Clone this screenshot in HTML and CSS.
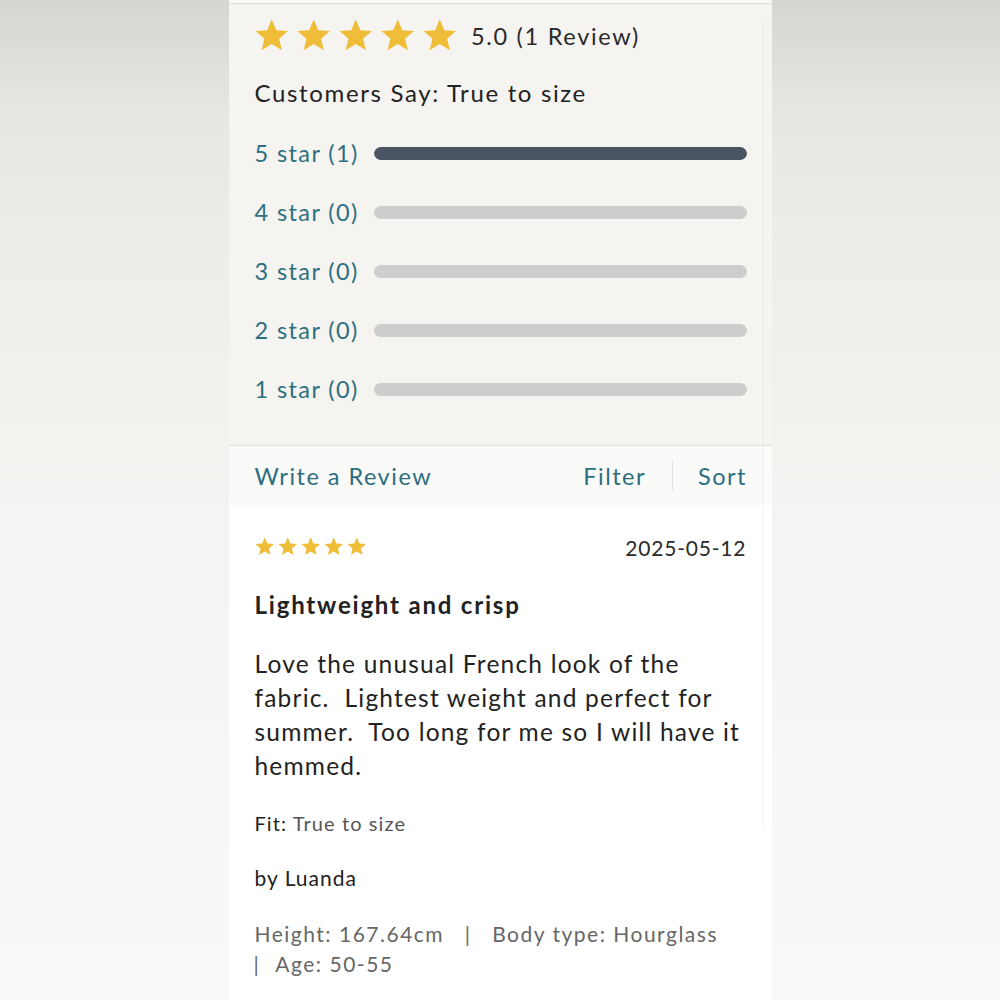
FILE: index.html
```html
<!DOCTYPE html>
<html lang="en">
<head>
<meta charset="utf-8">
<title>Reviews</title>
<link rel="stylesheet" href="styles.css">
</head>
<body>
<svg width="0" height="0" class="defs">
  <defs>
    <symbol id="star" viewBox="0 0 24 24">
      <polygon points="12,1.5 14.9,8.4 22.4,9 16.7,13.9 18.5,21.2 12,17.3 5.5,21.2 7.3,13.9 1.6,9 9.1,8.4"/>
    </symbol>
  </defs>
</svg>
<div class="phone">
  <div class="topstrip"></div>
  <section class="summary">
    <div class="rating-row">
      <div class="stars-lg">
        <svg class="star-lg"><use href="#star"/></svg>
        <svg class="star-lg"><use href="#star"/></svg>
        <svg class="star-lg"><use href="#star"/></svg>
        <svg class="star-lg"><use href="#star"/></svg>
        <svg class="star-lg"><use href="#star"/></svg>
      </div>
      <span class="avg">5.0 (1 Review)</span>
    </div>
    <div class="customers">Customers Say: True to size</div>
    <div class="bars">
      <div class="bar-row"><span class="bar-label">5 star (1)</span><div class="track"><div class="fill" style="width:100%"></div></div></div>
      <div class="bar-row"><span class="bar-label">4 star (0)</span><div class="track"><div class="fill" style="width:0%"></div></div></div>
      <div class="bar-row"><span class="bar-label">3 star (0)</span><div class="track"><div class="fill" style="width:0%"></div></div></div>
      <div class="bar-row"><span class="bar-label">2 star (0)</span><div class="track"><div class="fill" style="width:0%"></div></div></div>
      <div class="bar-row"><span class="bar-label">1 star (0)</span><div class="track"><div class="fill" style="width:0%"></div></div></div>
    </div>
  </section>
  <nav class="actions">
    <span class="link">Write a Review</span>
    <div class="right-links">
      <span class="link">Filter</span>
      <span class="sep"></span>
      <span class="link">Sort</span>
    </div>
  </nav>
  <article class="review">
    <div class="review-head">
      <div class="stars-sm">
        <svg class="star-sm"><use href="#star"/></svg>
        <svg class="star-sm"><use href="#star"/></svg>
        <svg class="star-sm"><use href="#star"/></svg>
        <svg class="star-sm"><use href="#star"/></svg>
        <svg class="star-sm"><use href="#star"/></svg>
      </div>
      <span class="date">2025-05-12</span>
    </div>
    <h3 class="title">Lightweight and crisp</h3>
    <p class="body">Love the unusual French look of the<br>fabric.&nbsp; Lightest weight and perfect for<br>summer.&nbsp; Too long for me so I will have it<br>hemmed.</p>
    <div class="fit"><span class="fit-key">Fit:</span> True to size</div>
    <div class="author">by Luanda</div>
    <div class="meta">Height: 167.64cm &nbsp; <span class="pipe">|</span> &nbsp; Body type: Hourglass<br><span class="pipe pipe-lead">|</span>&nbsp; Age: 50-55</div>
  </article>
</div>
</body>
</html>
```
FILE: styles.css
```css
* { box-sizing: border-box; }
html, body { margin: 0; padding: 0; }
body {
  height: 1000px;
  overflow: hidden;
  font-family: "Lato", "Liberation Sans", sans-serif;
  background: linear-gradient(180deg, #d5d5d1 0%, #e8e7e3 12%, #efeeea 28%, #f4f3f1 50%, #f6f6f5 75%, #f9f9f9 100%);
}
.defs { position: absolute; }
.phone {
  width: 543px;
  margin: 0 auto;
  height: 1000px;
  background: #ffffff;
  position: relative;
}
.phone::after {
  content: "";
  position: absolute;
  left: 533px;
  top: 20px;
  width: 2px;
  height: 810px;
  background: rgba(0,0,0,0.025);
}
.topstrip {
  height: 4px;
  background: #fafaf8;
  border-bottom: 1px solid #dcdcd9;
}
.summary {
  background: #f5f4f1;
  padding: 14px 26px 41px 26px;
  border-bottom: 1px solid #e2e1de;
}
.rating-row {
  display: flex;
  align-items: center;
  height: 36px;
  gap: 13px;
}
.stars-lg { display: flex; gap: 4.5px; margin-left: -2px; }
.star-lg { width: 37.5px; height: 37.5px; fill: #efbd37; }
.avg { font-size: 23.5px; color: #2a2a2a; letter-spacing: 1.7px; }
.customers {
  margin-top: 24px;
  font-size: 24px;
  line-height: 30px;
  color: #222;
  letter-spacing: 1.65px;
}
.bars {
  margin-top: 30px;
  display: flex;
  flex-direction: column;
  gap: 29px;
}
.bar-row {
  display: flex;
  align-items: center;
  height: 30px;
}
.bar-label {
  width: 119px;
  font-size: 23.5px;
  color: #2c6f80;
  letter-spacing: 1.4px;
}
.track {
  flex: 1;
  height: 13px;
  border-radius: 7px;
  background: #cdcdcd;
  overflow: hidden;
  margin-right: -1px;
}
.fill { height: 100%; background: #4a5465; border-radius: 7px; }
.actions {
  height: 59px;
  background: #fafaf8;
  display: flex;
  align-items: center;
  justify-content: space-between;
  padding: 0 26px;
}
.link { font-size: 23.5px; color: #2b6e80; letter-spacing: 1.5px; }
.right-links { display: flex; align-items: center; margin-right: -1.5px; }
.sep { width: 1px; height: 31px; background: #e4e4e2; margin: 0 25px 0 26px; }
.review {
  padding: 30px 26px 0 26px;
  background: #fff;
}
.review-head {
  display: flex;
  justify-content: space-between;
  align-items: center;
  height: 24px;
}
.stars-sm { display: flex; gap: 1.5px; margin-left: -1px; }
.star-sm { width: 21.5px; height: 21.5px; fill: #efbd37; }
.date { font-size: 21px; color: #2a2a2a; letter-spacing: 0.8px; margin-right: -0.8px; }
.title {
  margin: 31px 0 0 0;
  font-size: 24px;
  line-height: 30px;
  font-weight: 700;
  color: #222;
  letter-spacing: 1.8px;
}
.body {
  margin: 27px 0 0 0;
  font-size: 24.5px;
  line-height: 34px;
  color: #222;
  letter-spacing: 1.2px;
}
.fit {
  margin-top: 27px;
  font-size: 20px;
  line-height: 26px;
  color: #555;
  letter-spacing: 1.1px;
}
.fit-key { color: #222; }
.author {
  margin-top: 29px;
  font-size: 21px;
  line-height: 26px;
  color: #222;
  letter-spacing: 1px;
}
.meta {
  margin-top: 28px;
  font-size: 21px;
  line-height: 30px;
  color: #666;
  letter-spacing: 1.5px;
}
.pipe { color: #666; }
.pipe-lead { margin-left: -1px; margin-right: 2px; }
```
